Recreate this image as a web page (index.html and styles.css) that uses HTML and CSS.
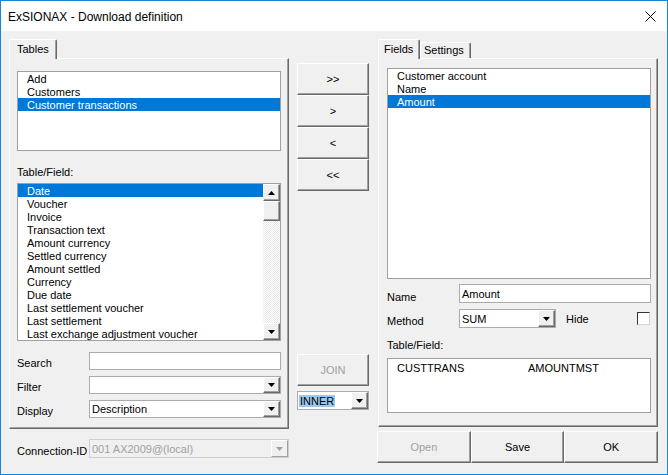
FILE: index.html
```html
<!DOCTYPE html>
<html lang="en">
  <head>
    <meta charset="UTF-8" />
    <title>ExSIONAX - Download definition</title>
    <link rel="stylesheet" href="styles.css">
  </head>
  <body>
    <div class="window">
      <div class="titlebar">
        <span class="title">ExSIONAX - Download definition</span>
        <svg class="close" width="11" height="11" viewBox="0 0 11 11"><path d="M0.5 0.5L10.5 10.5M10.5 0.5L0.5 10.5" stroke="#000" stroke-width="1" fill="none"/></svg>
      </div>
      <div class="client">
        <!-- left: tables -->
        <div class="col-left">
          <div class="tabstrip">
            <div class="tab active tab-tables">Tables</div>
          </div>
          <div class="panel panel-left">
            <div class="listbox list-tables">
              <div class="item">Add</div>
              <div class="item">Customers</div>
              <div class="item selected">Customer transactions</div>
            </div>
            <div class="caption">Table/Field:</div>
            <div class="listbox list-fields">
              <div class="rows">
                <div class="item selected">Date</div>
                <div class="item">Voucher</div>
                <div class="item">Invoice</div>
                <div class="item">Transaction text</div>
                <div class="item">Amount currency</div>
                <div class="item">Settled currency</div>
                <div class="item">Amount settled</div>
                <div class="item">Currency</div>
                <div class="item">Due date</div>
                <div class="item">Last settlement voucher</div>
                <div class="item">Last settlement</div>
                <div class="item">Last exchange adjustment voucher</div>
              </div>
              <div class="vscroll">
                <div class="sbtn"><svg width="7" height="4"><path d="M3.5 0L7 4H0z"/></svg></div>
                <div class="thumb"></div>
                <div class="track"></div>
                <div class="sbtn"><svg width="7" height="4"><path d="M0 0h7L3.5 4z"/></svg></div>
              </div>
            </div>
            <div class="form-row first">
              <span class="lbl">Search</span>
              <div class="field"></div>
            </div>
            <div class="form-row">
              <span class="lbl">Filter</span>
              <div class="field combo">
                <span class="value"></span>
                <span class="drop"><svg width="7" height="4"><path d="M0 0h7L3.5 4z"/></svg></span>
              </div>
            </div>
            <div class="form-row">
              <span class="lbl">Display</span>
              <div class="field combo">
                <span class="value">Description</span>
                <span class="drop"><svg width="7" height="4"><path d="M0 0h7L3.5 4z"/></svg></span>
              </div>
            </div>
          </div>
          <div class="form-row conn">
            <span class="lbl">Connection-ID</span>
            <div class="field combo disabled">
              <span class="value">001 AX2009@(local)</span>
              <span class="drop"><svg width="7" height="4"><path d="M0 0h7L3.5 4z" fill="#a0a0a0"/></svg></span>
            </div>
          </div>
        </div>

        <!-- middle: move buttons -->
        <div class="col-mid">
          <div class="btn move">&gt;&gt;</div>
          <div class="btn move">&gt;</div>
          <div class="btn move">&lt;</div>
          <div class="btn move">&lt;&lt;</div>
          <div class="btn join disabled">JOIN</div>
          <div class="field combo join-type">
            <span class="value"><span class="sel">INNER</span></span>
            <span class="drop"><svg width="7" height="4"><path d="M0 0h7L3.5 4z"/></svg></span>
          </div>
        </div>

        <!-- right: fields -->
        <div class="col-right">
          <div class="tabstrip">
            <div class="tab active tab-fields">Fields</div>
            <div class="tab tab-settings">Settings</div>
          </div>
          <div class="panel panel-right">
            <div class="listbox list-chosen">
              <div class="item">Customer account</div>
              <div class="item">Name</div>
              <div class="item selected">Amount</div>
            </div>
            <div class="form-row name-row">
              <span class="lbl">Name</span>
              <div class="field"><span class="value">Amount</span></div>
            </div>
            <div class="form-row method-row">
              <span class="lbl">Method</span>
              <div class="field combo method">
                <span class="value">SUM</span>
                <span class="drop"><svg width="7" height="4"><path d="M0 0h7L3.5 4z"/></svg></span>
              </div>
              <span class="hide-lbl">Hide</span>
              <span class="checkbox"></span>
            </div>
            <div class="caption right-caption">Table/Field:</div>
            <div class="listbox source">
              <div class="src-row">
                <span>CUSTTRANS</span>
                <span>AMOUNTMST</span>
              </div>
            </div>
          </div>
          <div class="actions">
            <div class="btn disabled">Open</div>
            <div class="btn">Save</div>
            <div class="btn">OK</div>
          </div>
        </div>
      </div>
    </div>
  </body>
</html>
```

FILE: styles.css
```css
* {
  margin: 0;
  padding: 0;
  box-sizing: border-box;
}
body {
  font-family: "Liberation Sans", Arial, sans-serif;
  font-size: 11px;
  color: #000;
  background: #fff;
}
.window {
  width: 668px;
  height: 475px;
  border: 1px solid #1883d7;
  background: #f0f0f0;
  display: flex;
  flex-direction: column;
}
.titlebar {
  height: 30px;
  background: #fff;
  display: flex;
  align-items: center;
  justify-content: space-between;
  padding: 1px 11px 0 7px;
  font-size: 12px;
}
.client {
  flex: 1;
  display: flex;
  gap: 8px;
  padding: 8px 0 0 8px;
}

/* columns */
.col-left {
  width: 280px;
  display: flex;
  flex-direction: column;
}
.col-mid {
  width: 72px;
  display: flex;
  flex-direction: column;
  padding-top: 24px;
}
.col-right {
  width: 281px;
  display: flex;
  flex-direction: column;
}

/* tabs */
.tabstrip {
  height: 20px;
  margin-bottom: -1px;
  display: flex;
  align-items: flex-start;
  position: relative;
  z-index: 1;
}
.col-right .tabstrip {
  padding-left: 1px;
}
.tab {
  background: #f0f0f0;
  border: 1px solid #fff;
  border-bottom: none;
  border-right-color: #696969;
  box-shadow: inset -1px 0 #a0a0a0;
  line-height: 13px;
  border-radius: 2px 2px 0 0;
}
.tab.active {
  height: 20px;
  padding-top: 3px;
}
.tab-tables {
  width: 48px;
  padding-left: 7px;
}
.tab-fields {
  width: 42px;
  padding-left: 5px;
}
.tab-settings {
  width: 51px;
  height: 16px;
  margin-top: 3px;
  padding: 1px 0 0 3px;
}

/* panels */
.panel {
  border: 1px solid;
  border-color: #fff #696969 #696969 #fff;
  box-shadow: inset -1px -1px #a0a0a0;
}
.panel-left {
  padding: 12px 7px 10px 7px;
}
.panel-right {
  margin-left: 1px;
  width: 280px;
  padding: 9px 6px 13px 8px;
}

/* list boxes */
.listbox {
  background: #fff;
  border: 1px solid #a0a0a0;
}
.item {
  height: 13px;
  line-height: 15px;
  padding-left: 9px;
  white-space: nowrap;
  overflow: hidden;
}
.item.selected {
  background: #0078d7;
  color: #fff;
}
.list-tables {
  height: 80px;
}
.list-fields {
  height: 158px;
  display: flex;
}
.list-fields .rows {
  flex: 1;
  overflow: hidden;
}
.list-chosen {
  height: 211px;
}
.caption {
  height: 13px;
  line-height: 14px;
  margin: 14px 0 5px;
}

/* scroll bar */
.vscroll {
  width: 17px;
  display: flex;
  flex-direction: column;
}
.sbtn,
.thumb,
.drop {
  background: #f0f0f0;
  border: 1px solid;
  border-color: #fff #696969 #696969 #fff;
  box-shadow: inset -1px -1px #a0a0a0;
}
.sbtn {
  height: 17px;
  display: flex;
  align-items: center;
  justify-content: center;
}
.thumb {
  height: 20px;
}
.track {
  flex: 1;
  background: repeating-conic-gradient(#fff 0 25%, #e8e8e8 0 50%) 0 0 / 2px 2px;
}

/* form rows */
.form-row {
  display: flex;
  align-items: center;
  height: 18px;
  margin-top: 6px;
}
.form-row.first {
  margin-top: 11px;
}
.lbl {
  width: 72px;
  padding-top: 4px;
  white-space: nowrap;
}
.field {
  flex: 1;
  height: 100%;
  background: #fff;
  border: 1px solid #ababab;
  display: flex;
  align-items: center;
}
.field .value {
  flex: 1;
  padding-left: 2px;
  white-space: nowrap;
}
.combo .drop {
  width: 17px;
  height: 100%;
  display: flex;
  align-items: center;
  justify-content: center;
}
.combo.disabled {
  background: #f0f0f0;
  border-color: #cfcfcf;
  color: #a0a0a0;
}
.combo.disabled .drop {
  border-color: #fff #a0a0a0 #a0a0a0 #fff;
  box-shadow: none;
}
.conn {
  height: 19px;
  margin-top: 10px;
  padding-left: 8px;
}

/* right side form */
.name-row {
  height: 19px;
  margin-top: 5px;
}
.name-row .lbl {
  padding-top: 6px;
}
.method-row {
  height: 19px;
}
.method {
  flex: none;
  width: 97px;
}
.hide-lbl {
  margin-left: 10px;
}
.checkbox {
  width: 13px;
  height: 13px;
  margin-left: auto;
  margin-right: 1px;
  background: #fff;
  border: 1px solid #333;
  border-right-color: #d4d4d4;
  border-bottom-color: #d4d4d4;
}
.right-caption {
  margin: 10px 0 7px;
}
.source {
  height: 55px;
  padding: 2px 0 0 9px;
}
.src-row {
  display: grid;
  grid-template-columns: 131px auto;
  line-height: 15px;
}

/* buttons */
.btn {
  background: #f0f0f0;
  border: 1px solid;
  border-color: #fff #696969 #696969 #fff;
  box-shadow: inset -1px -1px #a0a0a0;
  display: flex;
  align-items: center;
  justify-content: center;
  height: 32px;
}
.btn.disabled {
  color: #a0a0a0;
}
.join {
  margin-top: 163px;
}
.join-type {
  flex: none;
  height: 19px;
  margin-top: 5px;
}
.join-type .value {
  padding-left: 1px;
}
.sel {
  background: #99c9ef;
  padding: 0 1px;
}
.actions {
  display: flex;
  margin-top: 4px;
}
.actions .btn {
  flex: 1;
}
```
